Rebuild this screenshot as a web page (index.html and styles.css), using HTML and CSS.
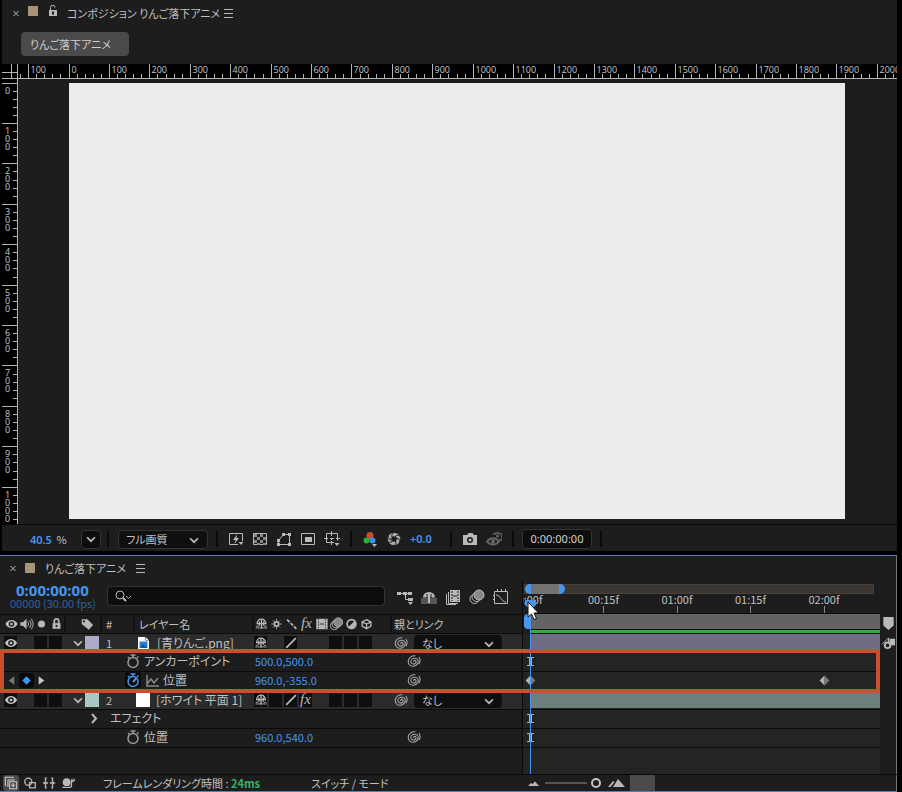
FILE: index.html
```html
<!DOCTYPE html>
<html lang="ja">

<head>
    <meta charset="utf-8">
    <meta name="viewport" content="width=device-width, initial-scale=1.0" />
    <title>りんご落下アニメ</title>
    <link rel="stylesheet" href="styles.css">
</head>

<body>
    <!-- Icon set -->
    <svg class="sprite" aria-hidden="true">
        <symbol id="close" viewBox="0 0 16 16"><path d="M5.500 6l5 5M10.500 6l-5 5" class="s" /></symbol>
        <symbol id="menu" viewBox="0 0 16 16"><path d="M4 4.500h9M4 8.500h9M4 12.500h9" class="s" /></symbol>
        <symbol id="unlock" viewBox="0 0 16 16"><path d="M4 7h8v6H4z" class="f" /><path d="M5.500 7V4.500a2 2 0 0 1 4.500 0" class="s" /><path d="M8 8.500v3" stroke="#1d1d1d" stroke-width="2" /></symbol>
        <symbol id="lock" viewBox="0 0 16 16"><path d="M3.500 7h9v6.500h-9z" class="f" /><path d="M5.500 7V4.500a2.500 2.500 0 0 1 5 0V7" class="s2" /><path d="M8 9v2.500" stroke="#1d1d1d" stroke-width="2" /></symbol>
        <symbol id="down" viewBox="0 0 16 16"><path d="M3.500 6L8 10.500 12.500 6" class="s2" /></symbol>
        <symbol id="right" viewBox="0 0 16 16"><path d="M6 4l4 4.500L6 13" class="s2" /></symbol>
        <symbol id="preview" viewBox="0 0 16 16"><path d="M10 13.500H1.500v-11h13V10" class="s" /><path d="M9 3.500L5 9h2.500l-1 4L11 7H8.500z" class="f" /><path d="M10.500 11h5L13 14z" class="f" /></symbol>
        <symbol id="checker" viewBox="0 0 16 16"><path d="M1.500 2.500h13v11h-13z" class="s" /><path d="M2 3h3v3H2zM8 3h3v3H8zM5 6h3v3H5zM11 6h3v3h-3zM2 9h3v3H2zM8 9h3v3H8zM5 12h3v2H5zM11 12h3v2h-3z" fill="#888" /></symbol>
        <symbol id="mask" viewBox="0 0 16 16"><path d="M2.500 13.500v-4l5-6h6v10z" class="s" /><path d="M1 12h3v3H1zM1 8h3v3H1zM6 2h3v3H6zM12 2h3v3h-3zM12 12h3v3h-3z" class="f" /></symbol>
        <symbol id="region" viewBox="0 0 16 16"><path d="M1.500 2.500h13v11h-13z" class="s" /><path d="M5 6h7v5H5z" class="f" /></symbol>
        <symbol id="guides" viewBox="0 0 16 16"><path d="M10 11.500H2.500v-9h11v7M7.500 0v5M7.500 7v2M7.500 10v4M0 7.500h4M6 7.500h4M12 7.500h4" class="s" /><path d="M10.500 12h5L13 15z" class="f" /></symbol>
        <symbol id="channels" viewBox="0 0 16 16"><circle cx="8" cy="4.500" r="3.500" fill="#cf4b2a" /><circle cx="4.500" cy="9.500" r="3" fill="#2fae38" /><circle cx="10.500" cy="9.500" r="3" fill="#3f8fe8" /><path d="M10 13h5l-2.500 3z" class="f" /></symbol>
        <symbol id="aperture" viewBox="0 0 16 16"><circle cx="8" cy="8" r="4.500" fill="none" stroke="#aaa" stroke-width="3.500" /><path d="M8 1.500c-2 1-2.500 2.500-2 4.500M14 5c-2-1-4-1-5 1M14 11c0-2-1-4-4-3.500M8 14.500c2-1 2.500-3 1.500-5M2 11c2 1 4 0 5-1.500M2 5c0 2 1 4 4 3.500" fill="none" stroke="#1d1d1d" /></symbol>
        <symbol id="camera" viewBox="0 0 16 16"><path d="M1 4h4l1.500-2h4L12 4h3v10H1z" class="f" /><circle cx="8" cy="9" r="3" fill="#1d1d1d" /><circle cx="8" cy="9" r="1.500" class="f" /></symbol>
        <symbol id="lastshot" viewBox="0 0 16 16"><path d="M1 10.500c3-4.500 9-4.500 12 0-3 4-9 4-12 0z" fill="none" stroke="#666" stroke-width="2" /><circle cx="7" cy="10.500" r="2" fill="#666" /><path d="M7 3h2l1-1h3l1 1h2v6h-3" fill="none" stroke="#666" stroke-width="1.500" /><circle cx="11.500" cy="5" r="1.500" fill="#666" /></symbol>
        <symbol id="search" viewBox="0 0 20 16"><circle cx="6" cy="7" r="4" class="s" /><path d="M9 10l3 3" class="s2" /><path d="M12 8l2.500 2.500L17 8" class="s" /></symbol>
        <symbol id="flow" viewBox="0 0 16 16"><path d="M1 4.500h12M8.500 4.500v6H14" class="s" /><path d="M0 3h4v3H0zM6 3h4v3H6zM11 3h4v3h-4zM11 9h5v3h-5zM11 13h5l-2.500 3z" class="f" /></symbol>
        <symbol id="shy" viewBox="0 0 16 16"><path d="M3 7.500a5 5 0 0 1 10 0z" fill="none" stroke="#bbb" stroke-width="1.500" /><path d="M8 3v10M5.500 5v5M10.500 5v5" fill="none" stroke="#bbb" stroke-width="1.500" /><path d="M1.500 12.500h13M2 10.500h3M11 10.500h3" class="s" /></symbol>
        <symbol id="shyfill" viewBox="0 0 16 16"><path d="M0 9h16v6H0z" fill="#555" /><path d="M2 8.500a6 5.500 0 0 1 12 0z" class="f" /><path d="M8 4v10" stroke="#bbb" stroke-width="2" /><path d="M6 5v4M10 5v4" stroke="#1d1d1d" /></symbol>
        <symbol id="frames" viewBox="0 0 16 16"><path d="M5 1h10v12H5z" class="f" /><path d="M3.500 3v11.500H13M1.500 5v10.500H11" class="s" /><path d="M7 2v10M13 2v10" stroke="#1d1d1d" stroke-dasharray="2 1" /><path d="M8 7h4" stroke="#1d1d1d" /></symbol>
        <symbol id="blur" viewBox="0 0 16 16"><circle cx="5.500" cy="10" r="4.500" class="s" /><circle cx="7.500" cy="8" r="4.500" fill="#1d1d1d" stroke="#bbb" /><circle cx="10" cy="6" r="5" fill="#888" stroke="#bbb" /></symbol>
        <symbol id="graph" viewBox="0 0 16 16"><path d="M1.500 2.500h13v12h-13zM4.500 0v3M8.500 0v3M12.500 0v3M0 6.500h2M0 10.500h2M3 6c5 0 5 7 10 7" class="s" /></symbol>
        <symbol id="eye" viewBox="0 0 16 16"><path d="M1 8c3.500-6 10.500-6 14 0-3.500 6-10.500 6-14 0z" fill="#c4c4c4" /><circle cx="8" cy="8" r="3.200" fill="#1d1d1d" /><circle cx="8" cy="8" r="1.500" fill="#c4c4c4" /></symbol>
        <symbol id="audio" viewBox="0 0 16 16"><path d="M1 6h3l4-4v12l-4-4H1z" class="f" /><path d="M9.500 5q2 3 0 6M11.500 3.500q3.500 4.500 0 9M13.500 2q4 6 0 12" class="s" /></symbol>
        <symbol id="solo" viewBox="0 0 16 16"><circle cx="8" cy="8" r="4" class="f" /></symbol>
        <symbol id="tag" viewBox="0 0 16 16"><path d="M2 2.500h6.500L15 9l-5 5.500L2 8z" class="f" /><circle cx="4.500" cy="5" r="1.200" fill="#1d1d1d" /></symbol>
        <symbol id="sun" viewBox="0 0 16 16"><circle cx="8" cy="8" r="2.500" class="s2" /><path d="M8 2v2.500M8 11.500V14M2 8h2.500M11.500 8H14M4 4l1.500 1.500M10.500 10.500L12 12M12 4l-1.500 1.500M5.500 10.500L4 12" class="s" /></symbol>
        <symbol id="quality" viewBox="0 0 16 16"><path d="M3 3l10.500 10.500" class="s2" stroke-dasharray="4 1.500" /></symbol>
        <symbol id="slash" viewBox="0 0 16 16"><path d="M2.500 13.500L13.500 2.500" class="s2" /></symbol>
        <symbol id="film" viewBox="0 0 16 16"><path d="M2 2h13v12H2z" class="f" /><path d="M4.500 2.500v11M12.500 2.500v11" stroke="#1d1d1d" stroke-dasharray="1.500 1.500" /><path d="M6 8h5" stroke="#1d1d1d" /></symbol>
        <symbol id="adjust" viewBox="0 0 16 16"><circle cx="8" cy="8" r="5" class="s2" /><path d="M11.500 4.500a5 5 0 0 1-7 7z" class="f" /></symbol>
        <symbol id="cube" viewBox="0 0 16 16"><path d="M8 3l5 2.500v5L8 13.500l-5-3v-5zM3 5.500l5 2.500 5-2.500M8 8v5" class="s" stroke-width="1.500" /></symbol>
        <symbol id="whip" viewBox="0 0 16 16"><path d="M8 9c-1-1.500 1-2.500 2-1s-.5 4-3 3.500-3.500-3.500-1.500-5.500 6-1.500 7 1-1 6.500-5 7-6.500-3-6-6.500S6 1.500 9.500 2M13.500 3.500q3 4 0 8" fill="none" stroke="#aaa" stroke-width="1.200" /></symbol>
        <symbol id="watch" viewBox="0 0 16 16"><circle cx="8" cy="9.500" r="5" fill="none" stroke="currentColor" stroke-width="1.500" /><path d="M8 5V2M5.500 2h5M12 5l1.500-1.500M3 4l1.500 1.500" fill="none" stroke="currentColor" stroke-width="1.500" /></symbol>
        <symbol id="hand" viewBox="0 0 16 16"><path d="M8 10l3-3.500" stroke="currentColor" stroke-width="2" /></symbol>
        <symbol id="curve" viewBox="0 0 16 16"><path d="M3 3v11h12M3 12l4-5 3 4L14 6" fill="none" stroke="#888" stroke-width="1.500" /></symbol>
        <symbol id="file" viewBox="0 0 16 16"><path d="M3 2h7.500L14 5.500V15H3z" fill="#fff" /><path d="M10.500 2v3.500H14" fill="none" stroke="#999" /><path d="M4.500 6.500h8V13h-8z" fill="#2a7fd8" /><path d="M5 13l3-4 4 4z" fill="#1257a5" /></symbol>
        <symbol id="prev" viewBox="0 0 16 16"><path d="M11 3.500v9L5 8z" fill="#777" /></symbol>
        <symbol id="next" viewBox="0 0 16 16"><path d="M5 3.500v9L11 8z" fill="#c8c8c8" /></symbol>
        <symbol id="key" viewBox="0 0 16 16"><path d="M8 3.500L12.500 8 8 12.500 3.500 8z" fill="#3d95f5" /></symbol>
        <symbol id="stack" viewBox="0 0 16 16"><path d="M6.500 6.500h8v8h-8zM4.500 12.500V4.500h8M2.500 10.500h-1v-9h9v1M8 10.500h5M10.500 8v5" fill="none" stroke="#ccc" stroke-width="1.200" /></symbol>
        <symbol id="rings" viewBox="0 0 16 16"><circle cx="6" cy="6.500" r="4" fill="none" stroke="#b9b9b9" stroke-width="1.500" /><path d="M7.500 7.500h6.500v6H7.500z" fill="none" stroke="#b9b9b9" stroke-width="1.500" /></symbol>
        <symbol id="braces" viewBox="0 0 16 16"><path d="M5.500 2.500H4V7L2 8l2 1v4.500h1.500M10.500 2.500H12V7l2 1-2 1v4.500h-1.500M7 8H4M12 8H9" fill="none" stroke="#b9b9b9" stroke-width="1.500" /></symbol>
        <symbol id="snail" viewBox="0 0 16 16"><circle cx="6.500" cy="7" r="4.500" class="f" /><path d="M1.500 13H10q2 0 2-3V6h2.500M12.500 6V3M15 6V3" fill="none" stroke="#b9b9b9" stroke-width="1.500" /></symbol>
        <symbol id="hill" viewBox="0 0 20 16"><path d="M5 11l3-3 1.500 1L12 6.500l4 4.500z" class="f" /></symbol>
        <symbol id="peak" viewBox="0 0 20 16"><path d="M2 12l5-6 1.500 1L4.500 12zM7 12l5-8 7 8z" class="f" /></symbol>
        <symbol id="marker" viewBox="0 0 16 16"><path d="M2.500 1h11v9L8 15l-5.500-5z" class="f" /></symbol>
        <symbol id="comp" viewBox="0 0 16 16"><path d="M9 4h6v7H9z" class="f" /><circle cx="7" cy="11" r="3" class="s2" /><path d="M1 10l7-7v5" class="s" /></symbol>
    </svg>

    <!-- Composition -->
    <section class="panel viewer">
        <div class="panel-title">
            <button class="icon-btn" aria-label="閉じる"><svg><use href="#close" /></svg></button>
            <span class="swatch sand"></span>
            <button class="icon-btn lock" aria-label="ロック"><svg><use href="#unlock" /></svg></button>
            <span>コンポジション りんご落下アニメ</span>
            <button class="icon-btn" aria-label="メニュー"><svg><use href="#menu" /></svg></button>
        </div>
        <div class="tabs">
            <button class="tab">りんご落下アニメ</button>
        </div>
        <div class="stage">
            <svg class="origin"><path d="M0 8.500h15M9.500 0v15M0 14.500h15M15.500 0v15" /></svg>
            <svg class="ruler-x" id="rulerX"></svg>
            <svg class="ruler-y" id="rulerY"></svg>
            <div class="pasteboard">
                <div class="frame" id="frame"></div>
            </div>
        </div>
        <div class="viewer-bar">
            <div class="magnify"><b>40.5</b> %</div>
            <button class="caret" aria-label="拡大率"><svg><use href="#down" /></svg></button>
            <i class="sep"></i>
            <label class="picker resolution">
                <select aria-label="解像度"><option>フル画質</option></select>
                <svg><use href="#down" /></svg>
            </label>
            <i class="sep"></i>
            <button class="tool" aria-label="高速プレビュー"><svg><use href="#preview" /></svg></button>
            <button class="tool" aria-label="透明グリッド"><svg><use href="#checker" /></svg></button>
            <button class="tool" aria-label="マスク"><svg><use href="#mask" /></svg></button>
            <button class="tool" aria-label="目標範囲"><svg><use href="#region" /></svg></button>
            <button class="tool" aria-label="ガイド"><svg><use href="#guides" /></svg></button>
            <i class="sep"></i>
            <button class="tool" aria-label="チャンネル"><svg><use href="#channels" /></svg></button>
            <button class="tool" aria-label="露出"><svg><use href="#aperture" /></svg></button>
            <button class="exposure">+0.0</button>
            <i class="sep"></i>
            <button class="tool" aria-label="スナップショット"><svg><use href="#camera" /></svg></button>
            <button class="tool" aria-label="スナップショットを表示"><svg><use href="#lastshot" /></svg></button>
            <i class="sep"></i>
            <button class="timecode">0:00:00:00</button>
            <i class="sep"></i>
        </div>
    </section>

    <!-- Timeline -->
    <section class="panel timeline">
        <div class="panel-title">
            <button class="icon-btn" aria-label="閉じる"><svg><use href="#close" /></svg></button>
            <span class="swatch sand"></span>
            <span>りんご落下アニメ</span>
            <button class="icon-btn" aria-label="メニュー"><svg><use href="#menu" /></svg></button>
        </div>

        <div class="timeline-body">
            <div class="layers">
                <div class="layer-top">
                    <div class="clock">
                        <b>0:00:00:00</b>
                        <span>00000 (30.00 fps)</span>
                    </div>
                    <label class="search">
                        <svg><use href="#search" /></svg>
                        <input type="text" aria-label="検索">
                    </label>
                    <div class="tools">
                        <button class="tool" aria-label="フローチャート"><svg><use href="#flow" /></svg></button>
                        <button class="tool" aria-label="シャイ"><svg><use href="#shyfill" /></svg></button>
                        <button class="tool" aria-label="フレームブレンド"><svg><use href="#frames" /></svg></button>
                        <button class="tool" aria-label="モーションブラー"><svg><use href="#blur" /></svg></button>
                        <button class="tool" aria-label="グラフエディター"><svg><use href="#graph" /></svg></button>
                    </div>
                </div>

                <div class="row head">
                    <div class="slots">
                        <svg><use href="#eye" /></svg><svg><use href="#audio" /></svg><svg><use href="#solo" /></svg><svg><use href="#lock" /></svg>
                    </div>
                    <div class="tag-col"><svg><use href="#tag" /></svg></div>
                    <div class="num">#</div>
                    <div class="name">レイヤー名</div>
                    <div class="slots switches">
                        <svg><use href="#shy" /></svg><svg><use href="#sun" /></svg><svg><use href="#quality" /></svg><em>fx</em><svg><use href="#film" /></svg><svg><use href="#blur" /></svg><svg><use href="#adjust" /></svg><svg><use href="#cube" /></svg>
                    </div>
                    <div class="link">親とリンク</div>
                </div>

                <div class="row layer">
                    <div class="slots">
                        <span class="box"><svg><use href="#eye" /></svg></span><span></span><span class="box"></span><span class="box"></span>
                    </div>
                    <div class="tag-col"><svg><use href="#down" /></svg><span class="swatch lavender"></span></div>
                    <div class="num">1</div>
                    <div class="name"><svg><use href="#file" /></svg>[青りんご.png]</div>
                    <div class="slots switches">
                        <span class="box"><svg><use href="#shy" /></svg></span><span></span><span class="box"><svg><use href="#slash" /></svg></span><span></span><span></span><span class="box"></span><span class="box"></span><span class="box"></span>
                    </div>
                    <div class="link">
                        <svg><use href="#whip" /></svg>
                        <label class="picker"><select aria-label="親 1"><option>なし</option></select><svg><use href="#down" /></svg></label>
                    </div>
                </div>

                <div class="row prop">
                    <div class="keys"></div>
                    <div class="label"><svg><use href="#watch" /></svg>アンカーポイント</div>
                    <div class="value">500.0,500.0</div>
                    <div class="link"><svg><use href="#whip" /></svg></div>
                </div>

                <div class="row prop">
                    <div class="keys"><svg><use href="#prev" /></svg><svg class="on"><use href="#key" /></svg><svg><use href="#next" /></svg></div>
                    <div class="label"><svg class="on"><use href="#watch" /><use href="#hand" /></svg><svg><use href="#curve" /></svg>位置</div>
                    <div class="value">960.0,-355.0</div>
                    <div class="link"><svg><use href="#whip" /></svg></div>
                </div>

                <div class="row layer">
                    <div class="slots">
                        <span class="box"><svg><use href="#eye" /></svg></span><span></span><span class="box"></span><span class="box"></span>
                    </div>
                    <div class="tag-col"><svg><use href="#down" /></svg><span class="swatch aqua"></span></div>
                    <div class="num">2</div>
                    <div class="name"><span class="solid"></span>[ホワイト 平面 1]</div>
                    <div class="slots switches">
                        <span class="box"><svg><use href="#shy" /></svg></span><span class="box"></span><span class="box"><svg><use href="#slash" /></svg></span><span class="box"><em>fx</em></span><span></span><span class="box"></span><span class="box"></span><span class="box"></span>
                    </div>
                    <div class="link">
                        <svg><use href="#whip" /></svg>
                        <label class="picker"><select aria-label="親 2"><option>なし</option></select><svg><use href="#down" /></svg></label>
                    </div>
                </div>

                <div class="row prop group">
                    <div class="keys"></div>
                    <div class="label"><svg><use href="#right" /></svg>エフェクト</div>
                </div>

                <div class="row prop">
                    <div class="keys"></div>
                    <div class="label"><svg><use href="#watch" /></svg>位置</div>
                    <div class="value">960.0,540.0</div>
                    <div class="link"><svg><use href="#whip" /></svg></div>
                </div>
            </div>

            <div class="tracks">
                <div class="navigator"><span></span></div>
                <div class="times">
                    <span style="left: 0%">0:00f</span>
                    <span style="left: 21%">00:15f</span>
                    <span style="left: 42%">01:00f</span>
                    <span style="left: 63%">01:15f</span>
                    <span style="left: 84%">02:00f</span>
                </div>
                <div class="work-area"><span></span></div>
                <div class="track"><span class="bar violet"></span></div>
                <div class="track"><i class="beam"></i></div>
                <div class="track"><i class="keyframe"></i><i class="keyframe" style="left: 83.5%"></i></div>
                <div class="track"><span class="bar teal"></span></div>
                <div class="track"><i class="beam"></i></div>
                <div class="track"><i class="beam"></i></div>
                <div class="playhead"></div>
                <svg class="cursor" viewBox="0 0 12 19"><path d="M1 1v15l3.500-3 2.500 5.500 2.500-1L7 12h4.500z" fill="#fff" stroke="#111" /></svg>
            </div>

            <div class="side">
                <svg><use href="#marker" /></svg>
                <svg><use href="#comp" /></svg>
            </div>

            <div class="highlight"></div>
        </div>

        <div class="timeline-foot">
            <div class="foot-left">
                <div class="toggles">
                    <button class="active" aria-label="スイッチ"><svg><use href="#stack" /></svg></button>
                    <button aria-label="転送制御"><svg><use href="#rings" /></svg></button>
                    <button aria-label="イン/アウト"><svg><use href="#braces" /></svg></button>
                    <button aria-label="レンダリング時間"><svg><use href="#snail" /></svg></button>
                </div>
                <div class="render">フレームレンダリング時間 : <b>24ms</b></div>
                <button class="mode">スイッチ / モード</button>
            </div>
            <svg><use href="#hill" /></svg>
            <input type="range" value="100" aria-label="ズーム">
            <svg class="big"><use href="#peak" /></svg>
            <div class="thumb"></div>
        </div>
    </section>

    <script>
        var frame = document.getElementById("frame");
        var rulerX = document.getElementById("rulerX");
        var rulerY = document.getElementById("rulerY");

        function line(x1, y1, x2, y2) {
            return '<path d="M' + x1 + ' ' + y1 + 'L' + x2 + ' ' + y2 + '"/>';
        }

        function text(x, y, value) {
            return '<text x="' + x + '" y="' + y + '">' + value + '</text>';
        }

        function drawRulers() {
            // 1 unit of the composition in screen pixels, a tick every 20 units
            var scale = frame.clientWidth / 1920;
            var left = frame.getBoundingClientRect().left - rulerX.getBoundingClientRect().left;
            var top = 4;
            var out = "";
            for (var u = -120; u <= 2040; u += 20) {
                var x = Math.floor(left + u * scale) + 0.5;
                var major = u % 100 == 0;
                out += line(x, major ? 0 : 10, x, 15);
                if (major) out += text(x + 2, 9, Math.abs(u));
            }
            rulerX.innerHTML = out + line(0, 14.5, 3000, 14.5);

            out = "";
            for (var v = 0; v <= 1080; v += 20) {
                var y = Math.floor(top + v * scale) + 0.5;
                var big = v % 100 == 0;
                out += line(big ? 0 : 11, y, 15, y);
                if (big) {
                    String(v).split("").forEach(function (n, i) {
                        out += text(3, y + 10 + i * 8, n);
                    });
                }
            }
            rulerY.innerHTML = out + line(15.5, 0, 15.5, 3000);
        }

        drawRulers();
        window.addEventListener("resize", drawRulers);
    </script>
</body>

</html>
```
FILE: styles.css
```css
* {
    box-sizing: border-box;
}

body {
    margin: 0;
    min-height: 100vh;
    display: flex;
    flex-direction: column;
    gap: 4px;
    background: #000;
    color: #c0c0c0;
    font-family: "Noto Sans CJK JP", sans-serif;
    font-size: 11px;
    line-height: 16px;
    font-feature-settings: "palt";
}

button,
select,
input {
    margin: 0;
    padding: 0;
    border: 0;
    background: none;
    color: inherit;
    font: inherit;
    font-feature-settings: inherit;
}

svg {
    display: block;
    flex: none;
    width: 16px;
    height: 16px;
}

.sprite {
    position: absolute;
    width: 0;
    height: 0;
}

.f {
    fill: #b9b9b9;
}

.s {
    fill: none;
    stroke: #b9b9b9;
}

.s2 {
    fill: none;
    stroke: #b9b9b9;
    stroke-width: 2;
}

.panel {
    display: flex;
    flex-direction: column;
    margin-right: 5px;
    background: #1d1d1d;
}

.panel-title {
    display: flex;
    align-items: center;
    height: 26px;
    padding-left: 6px;
}

.swatch {
    width: 10px;
    height: 10px;
    margin: 0 10px 0 4px;
}

.sand {
    background: #a8937a;
}

.panel-title span + .icon-btn {
    margin-left: 6px;
}

/* Composition panel */
.viewer {
    margin-left: 2px;
}

.viewer .swatch,
.viewer .lock {
    align-self: flex-start;
    margin-top: 6px;
}

.viewer .swatch {
    margin-right: 7px;
}

.viewer .panel-title .lock {
    margin: 3px 6px 0 0;
}

.viewer .panel-title span + .icon-btn:last-child {
    margin-left: 0;
}

.tabs {
    height: 38px;
    padding: 6px 19px 8px;
}

.tab {
    height: 24px;
    padding: 0 18px 0 9px;
    border-radius: 4px;
    background: #4a4a4a;
    color: #d0d0d0;
}

.stage {
    display: grid;
    grid-template-columns: 16px 1fr;
    grid-template-rows: 15px auto;
    overflow: hidden;
}

.origin,
.ruler-x,
.ruler-y {
    width: 100%;
    height: 100%;
    background: #000;
    stroke: #b4b4b4;
}

.ruler-y {
    height: 0;
    min-height: 100%;
}

.stage text {
    fill: #c3cad2;
    stroke: none;
    font-family: "Open Sans", sans-serif;
    font-size: 9px;
}

.pasteboard {
    padding: 4px 52px 5px 51px;
    background: #1d1d1d;
}

.frame {
    aspect-ratio: 776 / 436;
    background: #ececeb;
}

.viewer-bar {
    display: flex;
    align-items: center;
    height: 27px;
    padding: 2px 0 0 28px;
    border-top: 1px solid #080808;
}

.magnify {
    width: 51px;
    word-spacing: 2px;
}

.magnify b,
.exposure {
    color: #4596ec;
    font-family: "Noto Sans", sans-serif;
    font-weight: 600;
}

.caret {
    width: 20px;
    height: 19px;
    padding: 1px 2px;
    border: 1px solid #333;
    border-radius: 4px;
    background: #0d0d0d;
}

.caret svg,
.picker svg {
    width: 14px;
    height: 14px;
}

.sep {
    width: 14px;
    height: 16px;
    background: linear-gradient(#0b0b0b, #0b0b0b) center / 2px 100% no-repeat;
}

.picker {
    position: relative;
    display: block;
    border-radius: 4px;
    background: #0f0f0f;
}

.picker select {
    width: 100%;
    height: 100%;
    appearance: none;
    outline: none;
}

.picker svg {
    position: absolute;
    right: 6px;
    top: 2px;
    pointer-events: none;
}

.resolution {
    width: 90px;
    height: 19px;
    margin: 0 2px 0 3px;
    border: 1px solid #333;
}

.resolution select {
    padding-left: 7px;
}

.tool {
    display: flex;
    justify-content: center;
    width: 24px;
}

.exposure {
    width: 38px;
    padding-left: 4px;
    text-align: left;
}

.timecode {
    width: 70px;
    height: 20px;
    margin: 0 2px;
    border: 1px solid #333;
    border-radius: 4px;
    background: #0d0d0d;
    font-family: "Noto Sans", sans-serif;
    color: #d0d0d0;
}

/* Timeline panel */
.timeline {
    flex: 1;
    border: 1px solid #5580b8;
    border-width: 1px 0;
    box-shadow: inset -1px 0 #777;
}

.timeline .panel-title {
    height: 25px;
    padding: 0 0 2px 5px;
}

.timeline-body {
    position: relative;
    flex: 1;
    display: flex;
}

.layers {
    width: 523px;
    border-right: 1px solid #0a0a0a;
}

.layer-top {
    display: flex;
    height: 33px;
}

.clock {
    display: flex;
    flex-direction: column;
    width: 107px;
    padding: 2px 0 0 10px;
    color: #2c62a3;
    line-height: 11px;
}

.clock b {
    padding-left: 6px;
    color: #4596ec;
    font-family: "Noto Sans", sans-serif;
    font-size: 15px;
    line-height: 15px;
}

.search {
    display: flex;
    align-items: center;
    flex: 1;
    height: 20px;
    margin-top: 5px;
    padding-left: 6px;
    border: 1px solid #333;
    border-radius: 4px;
    background: #0d0d0d;
}

.search svg {
    width: 20px;
}

.search input {
    flex: 1;
    min-width: 0;
    outline: none;
}

.tools {
    display: flex;
    align-items: center;
    padding: 0 9px 2px 8px;
}

.row {
    display: grid;
    grid-template-columns: 60px 36px 33px 1fr 138px 132px;
    align-items: center;
    height: 19px;
    padding-left: 4px;
    border-bottom: 1px solid #0a0a0a;
}

.head {
    height: 20px;
    border-top: 1px solid #0a0a0a;
}

.head > div + div {
    box-shadow: inset 2px 0 #101010;
}

.tag-col {
    display: flex;
    align-items: center;
    justify-content: flex-end;
}

.tag-col svg {
    width: 14px;
    height: 14px;
}

.tag-col .swatch {
    width: 14px;
    height: 14px;
    margin: 0 1px 0 0;
}

.head .tag-col {
    justify-content: flex-start;
    padding-left: 16px;
}

.slots {
    display: flex;
}

.slots > * {
    width: 15px;
    height: 14px;
}

.switches {
    padding-left: 2px;
}

.row em {
    font-family: "Liberation Serif", serif;
    font-size: 15px;
    line-height: 12px;
    text-align: center;
    color: #b9b9b9;
}

.box {
    display: flex;
    justify-content: center;
    border-right: 2px solid #2b2b2b;
    background: #0f0f0f;
}

.box svg {
    width: 14px;
    height: 14px;
}

.layer {
    background: #2b2b2b;
}

.lavender {
    background: #adaacc;
}

.aqua {
    background: #a9c8c5;
}

.num {
    padding-left: 6px;
}

.name {
    display: flex;
    align-items: center;
    gap: 6px;
    padding-left: 2px;
    white-space: nowrap;
}

.layer .num,
.layer .name {
    padding-bottom: 1px;
}

.layer .name {
    font-size: 12px;
}

.head .name {
    padding-left: 6px;
}

.solid {
    width: 14px;
    height: 14px;
    margin-left: 1px;
    background: #fff;
}

.link {
    display: flex;
    align-items: center;
    gap: 6px;
    padding-left: 4px;
}

.link > svg {
    width: 14px;
    height: 14px;
}

.link .picker {
    width: 88px;
    height: 16px;
}

.link .picker select {
    padding-left: 8px;
    vertical-align: top;
}

.prop {
    grid-template-columns: 60px 1fr 138px 132px;
    padding-bottom: 2px;
}

.keys {
    display: flex;
}

.keys svg {
    width: 15px;
    height: 15px;
}

.prop .label {
    display: flex;
    align-items: center;
    gap: 3px;
    padding-left: 61px;
    font-size: 12px;
    white-space: nowrap;
}

.prop .label svg {
    color: #999;
}

.prop .on,
.prop .label .on {
    border-radius: 3px;
    background: #0a0a0a;
    color: #4596ec;
}

.group .label {
    gap: 8px;
    padding-left: 22px;
}

.value {
    padding-left: 3px;
    color: #4596ec;
}

.prop .link {
    padding-left: 17px;
}

/* Time side, 7px gutter before frame 0 */
.tracks {
    position: relative;
    flex: 1;
    display: flex;
    flex-direction: column;
    padding: 3px 0 0 7px;
    overflow: hidden;
    background: linear-gradient(#1d1d1d 53px, #242424 53px);
}

.navigator {
    height: 10px;
    margin: 0 6px 0 -6px;
    border: 1px solid #48413a;
    background: #3b3631;
}

.navigator span {
    display: block;
    width: 40px;
    height: 10px;
    margin-top: -1px;
    border: solid #4596ec;
    border-width: 0 6px;
    border-radius: 5px;
    background: #737373;
}

.times {
    position: relative;
    height: 19px;
}

.times span {
    position: absolute;
    width: 40px;
    height: 19px;
    margin-left: -20px;
    line-height: 10px;
    text-align: center;
    background: linear-gradient(#888, #888) center bottom / 1px 7px no-repeat;
}

.work-area {
    height: 21px;
    border-top: 1px solid #0a0a0a;
    border-bottom: 1px solid #0a0a0a;
}

.work-area span {
    display: block;
    height: 19px;
    border-bottom: 3px solid #2bb13b;
    background: linear-gradient(#636363 15px, #0a0a0a 15px);
}

.work-area::before {
    content: "";
    position: absolute;
    left: 1px;
    width: 6px;
    height: 15px;
    border-radius: 4px 0 0 4px;
    background: #4596ec;
}

.track {
    position: relative;
    height: 19px;
    margin-left: -7px;
    padding-left: 7px;
    border-bottom: 1px solid #0a0a0a;
}

.bar {
    display: block;
    height: 17px;
}

.violet {
    background: #6f6d86;
}

.teal {
    background: #6b807d;
}

.keyframe {
    position: absolute;
    top: 5px;
    left: 4px;
    width: 7px;
    height: 7px;
    transform: rotate(45deg);
    background: linear-gradient(45deg, #b0b0b0 50%, #777 50%);
}

.beam {
    position: absolute;
    top: 4px;
    left: 4px;
    width: 7px;
    height: 9px;
    border: solid #b0b0b0;
    border-width: 1px 0;
    background: linear-gradient(#b0b0b0, #b0b0b0) center / 3px 100% no-repeat;
}

.playhead {
    position: absolute;
    left: 7px;
    top: 19px;
    bottom: 0;
    width: 1px;
    background: #4596ec;
}

.playhead::before {
    content: "";
    position: absolute;
    left: -5px;
    top: 0;
    width: 11px;
    height: 10px;
    background: #4596ec;
    clip-path: polygon(0 0, 100% 0, 100% 50%, 50% 100%, 0 50%);
}

.cursor {
    position: absolute;
    left: 4px;
    top: 20px;
    width: 12px;
    height: 19px;
}

.side {
    width: 17px;
    padding: 35px 0 0 1px;
}

.side svg {
    width: 15px;
    height: 15px;
    margin-bottom: 4px;
}

.highlight {
    position: absolute;
    left: 0;
    right: 17px;
    top: 68px;
    height: 44px;
    border: 4px solid #c9502e;
    pointer-events: none;
}

.timeline-foot {
    display: flex;
    align-items: center;
    height: 17px;
    border-top: 1px solid #0a0a0a;
}

.foot-left {
    display: flex;
    align-items: center;
    width: 523px;
}

.toggles {
    display: flex;
    gap: 3px;
    width: 103px;
    padding-left: 3px;
}

.toggles button {
    padding: 1px;
    border-radius: 3px;
}

.toggles svg {
    width: 14px;
    height: 14px;
}

.toggles .active {
    background: #4a4a4a;
}

.render {
    width: 208px;
}

.render b {
    color: #35b065;
}

.timeline-foot > svg {
    width: 20px;
}

input[type="range"] {
    appearance: none;
    width: 56px;
    height: 10px;
    margin: 0 5px 0 2px;
    background: linear-gradient(#555, #555) left center / 42px 2px no-repeat;
}

input[type="range"]::-webkit-slider-thumb {
    appearance: none;
    width: 10px;
    height: 10px;
    border: 2px solid #c4c4c4;
    border-radius: 50%;
    background: #1d1d1d;
}

.thumb {
    align-self: stretch;
    width: 25px;
    margin-left: 4px;
    background: #4b4b4b;
}
```
